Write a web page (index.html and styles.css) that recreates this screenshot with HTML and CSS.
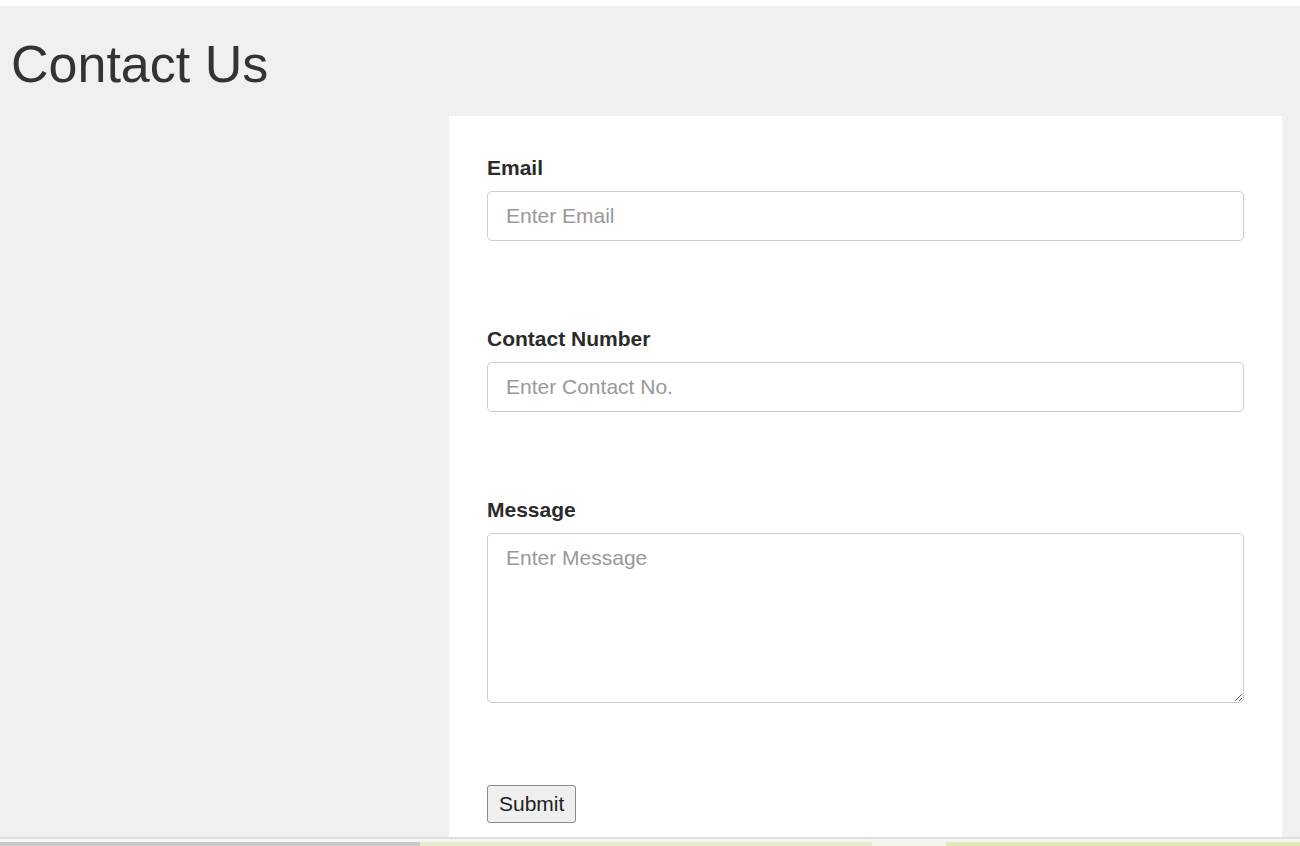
FILE: index.html
```html
<!DOCTYPE html>
<html lang="en">
<head>
<meta charset="utf-8">
<title>Contact Us</title>
<link rel="stylesheet" href="styles.css">
</head>
<body>
<div class="page">
  <div class="top-strip"></div>
  <main class="main">
    <h1 class="title">Contact Us</h1>
    <div class="layout">
      <div class="side"></div>
      <form class="card">
        <div class="group">
          <label class="label" for="email">Email</label>
          <input class="field" id="email" type="text" placeholder="Enter Email">
        </div>
        <div class="group">
          <label class="label" for="contact">Contact Number</label>
          <input class="field" id="contact" type="text" placeholder="Enter Contact No.">
        </div>
        <div class="group">
          <label class="label" for="message">Message</label>
          <textarea class="field area" id="message" placeholder="Enter Message"></textarea>
        </div>
        <div class="actions">
          <button class="submit" type="button">Submit</button>
        </div>
      </form>
    </div>
  </main>
  <div class="taskbar">
    <div class="seg seg-gray"></div>
    <div class="seg seg-pale"></div>
    <div class="seg seg-light"></div>
    <div class="seg seg-lime"></div>
  </div>
</div>
</body>
</html>
```

FILE: styles.css
```css
* { box-sizing: border-box; }

html, body {
  margin: 0;
  padding: 0;
  background: #ffffff;
}

body {
  font-family: "Liberation Sans", Arial, sans-serif;
  color: #333333;
}

.page {
  height: 846px;
  display: flex;
  flex-direction: column;
  overflow: hidden;
}

.top-strip {
  height: 6px;
  flex: none;
  background: #ffffff;
}

.main {
  flex: 1;
  min-height: 0;
  overflow: hidden;
  background: #f0f0f0;
}

.title {
  margin: 28px 0 0 0;
  padding-left: 11px;
  font-size: 52px;
  line-height: 60px;
  font-weight: normal;
  color: #333333;
}

.layout {
  margin-top: 22px;
  display: grid;
  grid-template-columns: 449px 833px;
}

.card {
  background: #ffffff;
  padding: 40px 38px 60px;
  display: flex;
  flex-direction: column;
  gap: 86px;
}

.group {
  display: flex;
  flex-direction: column;
}

.label {
  font-size: 21px;
  line-height: 24px;
  font-weight: bold;
  color: #2b2b2b;
  margin-bottom: 11px;
}

.field {
  width: 100%;
  height: 50px;
  padding: 0 18px;
  border: 1px solid #cccccc;
  border-radius: 5px;
  font-family: "Liberation Sans", Arial, sans-serif;
  font-size: 21px;
  color: #333333;
  background: #ffffff;
  outline: none;
}

.field::placeholder {
  color: #999999;
}

.area {
  height: 170px;
  padding: 12px 18px;
  line-height: 24px;
  resize: vertical;
}

.actions {
  margin-top: -4px;
}

.submit {
  font-family: "Liberation Sans", Arial, sans-serif;
  font-size: 21px;
  line-height: 24px;
  color: #222222;
  background: #efefef;
  border: 1px solid #8a8a8a;
  border-radius: 3px;
  padding: 6px 11px;
  height: 38px;
}

.taskbar {
  flex: none;
  height: 9px;
  border-top: 2px solid #dedede;
  padding-top: 3px;
  background: #f6f6f6;
  display: flex;
}

.seg { height: 4px; }
.seg-gray { width: 420px; background: #c9c9c9; }
.seg-pale { width: 452px; background: #e6eac6; }
.seg-light { width: 74px; background: #f4f6e8; }
.seg-lime { flex: 1; background: #e2e8b2; }
```
